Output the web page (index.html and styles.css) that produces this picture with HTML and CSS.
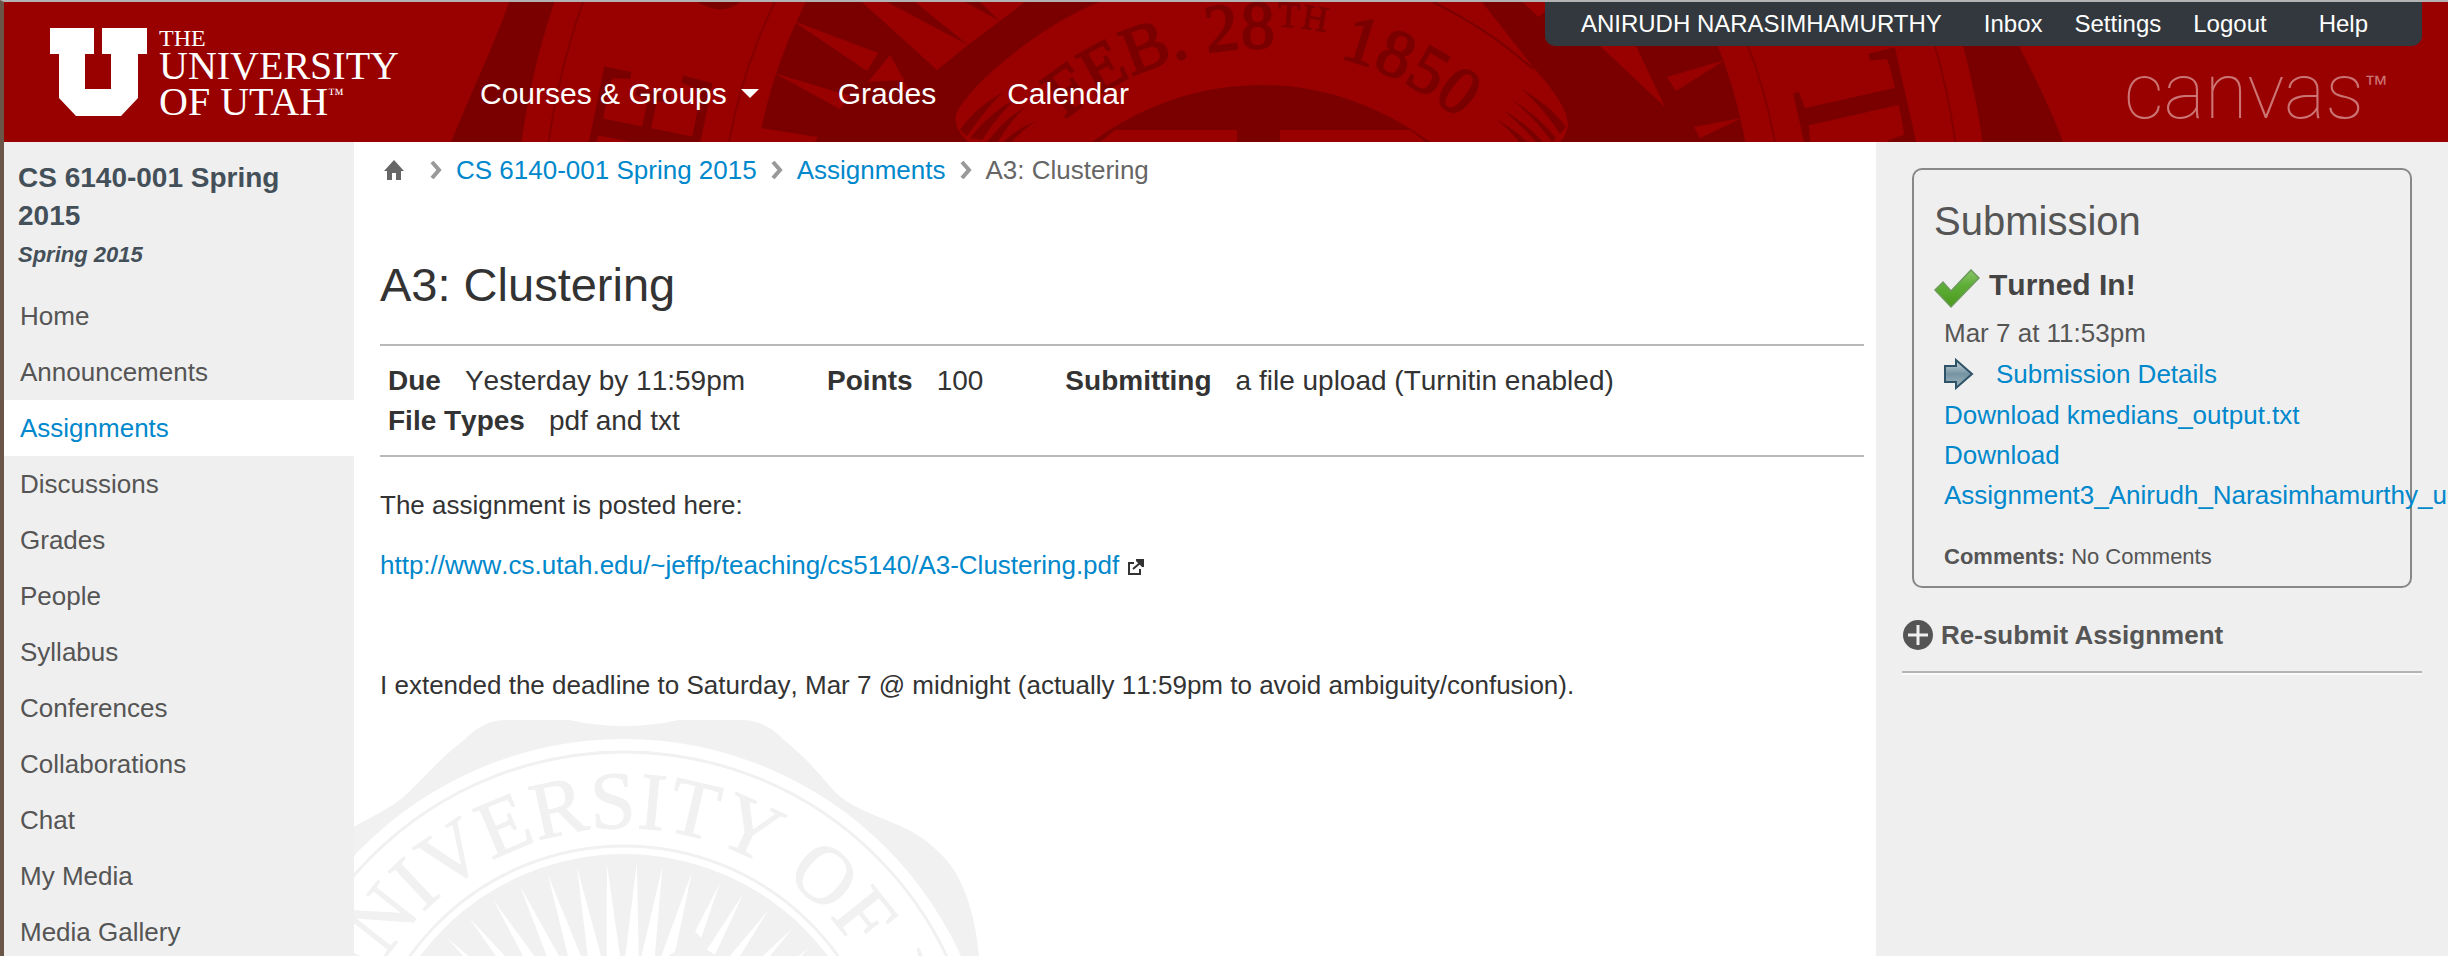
FILE: index.html
```html
<!DOCTYPE html>
<html lang="en">
<head>
<meta charset="utf-8">
<title>A3: Clustering</title>
<link rel="stylesheet" href="styles.css">
</head>
<body>
<header class="header">
  <svg class="header-seal" viewBox="4 2 2444 140" preserveAspectRatio="xMidYMin slice" aria-hidden="true">
    <defs>
      <path id="seal-ring" d="M1252 795a560 560 0 0 1 0 -1120a560 560 0 0 1 0 1120"/>
      <path id="ribbon-arc" d="M1262 664a308 308 0 0 1 0 -616a308 308 0 0 1 0 616"/>
    </defs>
    <path fill="#7a0000" d="M451 142C470 95 492 50 510 0H1998C2008 30 2040 80 2063 142Z"/>
    <circle cx="1252" cy="240" r="737" fill="#900"/>
    <circle cx="1252" cy="240" r="710" fill="none" stroke="#840000" stroke-width="2"/>
    <circle cx="1252" cy="235" r="531" fill="none" stroke="#840000" stroke-width="2"/>
    <circle cx="1252" cy="230" r="501" fill="#7a0000"/>
    <text class="ring-text ring-text-header"><textPath href="#seal-ring" startOffset="50%">THE UNIVERSITY OF UTAH</textPath></text>
    <g fill="#900">
      <path d="M793 21L878 53L867 71ZM774 73L850 96L840 109ZM760 128L818 137L815 142H758ZM890 55L904 80L868 82ZM862 2H887L968 45L937 70ZM915 2H965L1000 21L968 45ZM980 2H1025L1000 21ZM900 75L915 100L900 88Z"/>
      <path d="M1523 2H1545V12L1538 17ZM1600 46H1636L1665 107ZM1667 77L1725 60L1676 91ZM1694 127L1742 118L1700 138Z"/>
      <path d="M968 142Q953 128 956 114C972 80 1050 20 1100 2H1482L1533 67C1555 92 1568 110 1568 126Q1566 136 1560 142Z"/>
    </g>
    <path d="M1433 2Q1490 30 1533 69" fill="none" stroke="#7a0000" stroke-width="2"/>
    <path fill="#7a0000" d="M960 130Q975 108 1003 92Q985 110 967 136ZM970 138Q990 112 1018 97Q1000 112 982 140ZM987 142Q1005 118 1027 106Q1012 118 998 142ZM1003 142Q1018 128 1036 121Q1022 130 1012 142ZM1523 90Q1550 105 1566 127L1560 134Q1545 110 1523 90ZM1512 100Q1538 115 1556 138L1552 142Q1535 118 1512 100ZM1503 110Q1525 122 1543 142H1536Q1520 124 1503 110ZM1497 120Q1513 128 1527 142H1519Q1510 130 1497 120Z"/>
    <text class="ribbon-text"><textPath href="#ribbon-arc" startOffset="50%">FEB. 28<tspan class="ordinal" dy="-22">TH</tspan><tspan dy="22"> 1850</tspan></textPath></text>
    <path fill="#7a0000" d="M1092 142Q1170 85 1263 85Q1350 85 1430 142Z"/>
    <path fill="#900" d="M1115 130H1237V142H1100ZM1280 130H1410L1426 142H1280Z"/>
  </svg>
  <a class="logo" href="#" aria-label="The University of Utah">
    <svg width="97" height="88" viewBox="0 0 97 88" aria-hidden="true"><path fill="#fff" d="M0 0H44V26H35V61H61V26H52V0H97V26H88V70L71 88H26L9 70V26H0Z"/></svg>
    <span class="wordmark"><span class="wordmark-the">THE</span><span>UNIVERSITY</span><span>OF UTAH<small>™</small></span></span>
  </a>
  <nav class="menu" aria-label="Main">
    <a href="#">Courses &amp; Groups<i class="caret"></i></a>
    <a href="#">Grades</a>
    <a href="#">Calendar</a>
  </nav>
  <div class="account">
    <nav class="identity" aria-label="Account"><a class="user" href="#">ANIRUDH NARASIMHAMURTHY</a><a href="#">Inbox</a><a href="#">Settings</a><a href="#">Logout</a><a class="help" href="#">Help</a></nav>
    <a class="canvas-logo" href="#"><span>canvas</span><small>™</small></a>
  </div>
</header>
<div class="page">
  <aside class="sidebar">
    <h2 class="course">CS 6140-001 Spring 2015</h2>
    <p class="term">Spring 2015</p>
    <nav class="sections" aria-label="Course">
      <a href="#">Home</a>
      <a href="#">Announcements</a>
      <a class="active" href="#">Assignments</a>
      <a href="#">Discussions</a>
      <a href="#">Grades</a>
      <a href="#">People</a>
      <a href="#">Syllabus</a>
      <a href="#">Conferences</a>
      <a href="#">Collaborations</a>
      <a href="#">Chat</a>
      <a href="#">My Media</a>
      <a href="#">Media Gallery</a>
    </nav>
  </aside>
  <main class="main">
    <svg class="watermark" width="648" height="236" viewBox="0 0 648 236" aria-hidden="true">
      <defs>
        <path id="mark-ring" d="M270 670a281 281 0 0 1 0 -562a281 281 0 0 1 0 562"/>
        <path id="ray" d="M270 143L277 240L278 255H262L263 240Z"/>
      </defs>
      <path fill="#f1f1f1" d="M0 107C20 95 35 90 55 72C75 52 90 35 110 20C125 5 138 0 152 0H215Q270 12 325 0H388C402 0 415 5 430 20C450 36 462 50 481 72C505 95 540 98 571 120C590 136 598 145 604 157C616 180 622 205 625 236H0Z"/>
      <circle cx="270" cy="389" r="370" fill="#fff"/>
      <circle cx="270" cy="389" r="357" fill="none" stroke="#f1f1f1" stroke-width="3"/>
      <circle cx="270" cy="389" r="263" fill="none" stroke="#f1f1f1" stroke-width="3"/>
      <circle cx="270" cy="389" r="255" fill="#f1f1f1"/>
      <text class="ring-text ring-text-mark"><textPath href="#mark-ring" startOffset="50%">THE UNIVERSITY OF UTAH</textPath></text>
      <g fill="#fff">
        <use href="#ray" transform="rotate(-46 270 389)"/>
        <use href="#ray" transform="rotate(-39 270 389)"/>
        <use href="#ray" transform="rotate(-32 270 389)"/>
        <use href="#ray" transform="rotate(-25 270 389)"/>
        <use href="#ray" transform="rotate(-18 270 389)"/>
        <use href="#ray" transform="rotate(-11 270 389)"/>
        <use href="#ray" transform="rotate(-4 270 389)"/>
        <use href="#ray" transform="rotate(3 270 389)"/>
        <use href="#ray" transform="rotate(9 270 389)"/>
        <use href="#ray" transform="rotate(16 270 389)"/>
        <use href="#ray" transform="rotate(23 270 389)"/>
        <use href="#ray" transform="rotate(29 270 389)"/>
        <use href="#ray" transform="rotate(36 270 389)"/>
        <use href="#ray" transform="rotate(43 270 389)"/>
        <use href="#ray" transform="rotate(49 270 389)"/>
      </g>
      <path fill="#f1f1f1" d="M340 210L351 222L345 225L363 236H314L336 222Z"/>
    </svg>
    <nav class="crumbs" aria-label="Breadcrumb">
      <a class="home" href="#" aria-label="Home"><svg width="20" height="20" viewBox="0 0 20 20"><path fill="#666" d="M10 0L20 11H17V20H12V13H8V20H3V11H0Z"/></svg></a>
      <svg class="sep" width="12" height="18" viewBox="0 0 12 18"><path d="M2 1L9 9L2 17"/></svg>
      <a href="#">CS 6140-001 Spring 2015</a>
      <svg class="sep" width="12" height="18" viewBox="0 0 12 18"><path d="M2 1L9 9L2 17"/></svg>
      <a href="#">Assignments</a>
      <svg class="sep" width="12" height="18" viewBox="0 0 12 18"><path d="M2 1L9 9L2 17"/></svg>
      <span>A3: Clustering</span>
    </nav>
    <h1 class="title">A3: Clustering</h1>
    <dl class="details">
      <div><dt>Due</dt><dd>Yesterday by 11:59pm</dd></div>
      <div><dt>Points</dt><dd>100</dd></div>
      <div><dt>Submitting</dt><dd>a file upload (Turnitin enabled)</dd></div>
      <div><dt>File Types</dt><dd>pdf and txt</dd></div>
    </dl>
    <div class="description">
      <p>The assignment is posted here:</p>
      <p><a href="#">http://www.cs.utah.edu/~jeffp/teaching/cs5140/A3-Clustering.pdf</a> <svg class="external" width="18" height="18" viewBox="0 0 18 18"><path d="M7 5H2V16H13V11M6 11L13 5" fill="none" stroke="#333" stroke-width="2"/><path fill="#333" d="M9 1H17V9H15L9 3Z"/></svg></p>
      <p>&nbsp;</p>
      <p>I extended the deadline to Saturday, Mar 7 @ midnight (actually 11:59pm to avoid ambiguity/confusion).</p>
    </div>
  </main>
  <aside class="right">
    <section class="card">
      <h2>Submission</h2>
      <h3><svg width="46" height="40" viewBox="0 0 46 40"><defs><linearGradient id="tick" x1="0" y1="0" x2="0" y2="1"><stop offset="0" stop-color="#8cc66a"/><stop offset=".4" stop-color="#5fae38"/><stop offset="1" stop-color="#4a9a1c"/></linearGradient></defs><path fill="url(#tick)" stroke="#6d9a5c" stroke-width="1.5" d="M1 21L9 13L17 22L37 1L45 9L17 38Z"/></svg>Turned In!</h3>
      <div class="card-body">
        <p>Mar 7 at 11:53pm</p>
        <p class="detail-link"><svg width="30" height="32" viewBox="0 0 30 32"><defs><linearGradient id="arrow" x1="0" y1="0" x2="0" y2="1"><stop offset="0" stop-color="#c9d6dc"/><stop offset=".5" stop-color="#7593a2"/><stop offset="1" stop-color="#a3b8c2"/></linearGradient></defs><path fill="url(#arrow)" stroke="#2f5366" stroke-width="2" d="M1 8H12V2L28 16L12 30V24H1Z"/></svg><a href="#">Submission Details</a></p>
        <p><a href="#">Download kmedians_output.txt</a></p>
        <p><a href="#">Download Assignment3_Anirudh_Narasimhamurthy_u0</a></p>
        <p class="comments"><b>Comments:</b> No Comments</p>
      </div>
    </section>
    <a class="resubmit" href="#"><svg width="30" height="30" viewBox="0 0 30 30"><circle cx="15" cy="15" r="15" fill="#555"/><path d="M15 5V25M5 15H25" stroke="#efefef" stroke-width="3"/></svg>Re-submit Assignment</a>
  </aside>
</div>
</body>
</html>
```
FILE: styles.css
```css
* {
  box-sizing: border-box;
}

body {
  margin: 0;
  overflow-x: hidden;
  min-height: 100vh;
  display: flex;
  flex-direction: column;
  border-left: 4px solid #6b5548;
  border-top: 2px solid #b3b3b3;
  background: #fff;
  color: #333;
  font: 26px/40px "Liberation Sans", Arial, sans-serif;
}

h1, h2, h3, p, dl, dd {
  margin: 0;
}

a {
  color: #0088cc;
  text-decoration: none;
}

/* Header */
.header {
  display: flex;
  position: relative;
  height: 140px;
  overflow: hidden;
  background: #990000;
}

.header-seal {
  position: absolute;
  inset: 0;
  width: 100%;
  height: 100%;
}

.ring-text,
.ribbon-text {
  font-family: "Liberation Serif", serif;
  text-anchor: middle;
}

.ring-text-header {
  font-size: 164px;
  fill: #7a0000;
  stroke: #7a0000;
  stroke-width: 2px;
}

.ring-text-mark {
  font-size: 82px;
  fill: #f1f1f1;
  stroke: #f1f1f1;
  stroke-width: 1px;
}

.ribbon-text {
  font-size: 68px;
  fill: #7a0000;
  stroke: #7a0000;
  stroke-width: 2px;
}

.ordinal {
  font-size: 36px;
  stroke-width: 1px;
}

.logo,
.menu,
.account {
  position: relative;
}

.logo {
  display: flex;
  align-items: flex-start;
  gap: 12px;
  width: 476px;
  padding: 26px 0 0 46px;
}

.wordmark {
  display: flex;
  flex-direction: column;
  color: #fff;
  font: 40px/36px "Liberation Serif", serif;
}

.wordmark-the {
  font-size: 24px;
  line-height: 20px;
}

.wordmark small {
  font-size: 16px;
  line-height: 20px;
  vertical-align: top;
}

.menu {
  display: flex;
  gap: 71px;
  padding-top: 72px;
  font-size: 30px;
}

.menu a {
  color: #fff;
}

.caret {
  display: inline-block;
  margin: 0 8px 0 14px;
  vertical-align: 6px;
  border: 9px solid transparent;
  border-top-color: #fff;
  border-bottom: 0;
}

.account {
  margin-left: auto;
  margin-right: 26px;
}

.identity {
  display: flex;
  gap: 32px;
  padding: 2px 54px 2px 36px;
  border-radius: 0 0 10px 10px;
  background: #32383e;
  font-size: 24px;
}

.identity a {
  color: #fff;
}

.identity .user {
  margin-right: 10px;
}

.identity .help {
  margin-left: 20px;
}

.canvas-logo {
  display: flex;
  justify-content: flex-end;
  padding-right: 34px;
  color: #cc7474;
  font: 100 78px/92px Roboto, sans-serif;
}

.canvas-logo small {
  font: 24px/76px "Liberation Sans", sans-serif;
}

/* Page columns */
.page {
  flex: 1;
  display: grid;
  grid-template-columns: 350px 1fr 572px;
}

/* Course sidebar */
.sidebar {
  overflow: hidden;
  background: #efefef;
}

.course {
  padding: 17px 60px 0 14px;
  color: #445059;
  font-size: 28px;
  line-height: 38px;
}

.term {
  padding: 0 14px;
  color: #445059;
  font-size: 22px;
  font-style: italic;
  font-weight: bold;
}

.sections {
  display: flex;
  flex-direction: column;
  margin: 13px 0 -4px;
}

.sections a {
  padding-left: 16px;
  color: #555;
  line-height: 56px;
}

.sections .active {
  background: #fff;
  color: #0088cc;
}

/* Assignment */
.main,
.card h3 {
  font-kerning: none;
}

.main {
  position: relative;
  padding: 8px 12px 40px 26px;
}

.watermark {
  position: absolute;
  left: 0;
  bottom: 0;
}

.crumbs,
.title,
.details,
.description {
  position: relative;
}

.crumbs {
  display: flex;
  align-items: center;
  gap: 14px;
  color: #666;
}

.home {
  display: flex;
  margin: 0 12px 0 4px;
}

.sep path {
  fill: none;
  stroke: #999;
  stroke-width: 4;
}

.title {
  margin: 67px 0 31px;
  font-size: 47px;
  font-weight: normal;
  line-height: 56px;
}

.details {
  display: flex;
  flex-wrap: wrap;
  column-gap: 82px;
  padding: 15px 8px 14px;
  border-top: 2px solid #b9b9b9;
  border-bottom: 2px solid #b9b9b9;
  font-size: 28px;
}

.details div {
  display: flex;
  gap: 24px;
}

.details dt {
  font-weight: bold;
}

.description {
  display: flex;
  flex-direction: column;
  gap: 20px;
  margin-top: 28px;
}

.external {
  vertical-align: -2px;
}

/* Submission column */
.right {
  padding: 26px 26px 40px;
  background: #efefef;
  color: #555;
}

.card {
  margin: 0 10px 27px;
  padding: 27px 20px 9px;
  border: 2px solid #888;
  border-radius: 10px;
}

.card h2 {
  margin-bottom: 20px;
  font-size: 40px;
  font-weight: normal;
  line-height: 48px;
}

.card h3 {
  display: flex;
  align-items: center;
  gap: 9px;
  height: 40px;
  margin-bottom: 8px;
  color: #444;
  font-size: 30px;
}

.card h3 svg {
  margin-top: 8px;
}

.card-body {
  padding: 0 10px;
}

.detail-link {
  display: flex;
  align-items: center;
  gap: 22px;
  padding: 1px 0;
}

.comments {
  margin-top: 22px;
  font-size: 22px;
}

.resubmit {
  display: flex;
  align-items: center;
  gap: 8px;
  padding: 0 0 16px 1px;
  border-bottom: 2px solid #b4b4b4;
  box-shadow: 0 2px #fafafa;
  color: #555;
  font-weight: bold;
}
```
